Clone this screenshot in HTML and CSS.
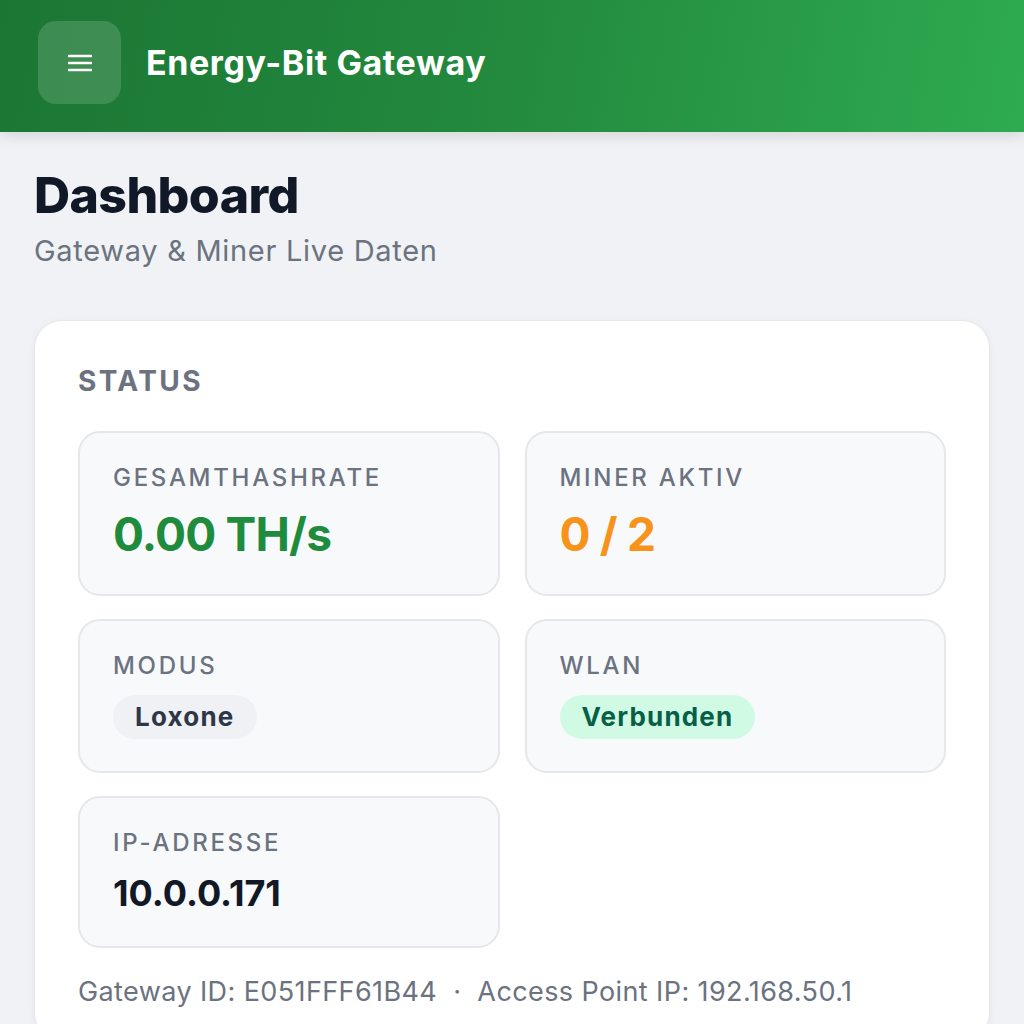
FILE: index.html
```html
<!DOCTYPE html>
<html lang="de">
<head>
    <meta charset="UTF-8">
    <meta name="viewport" content="width=device-width, initial-scale=1.0">
    <title>Energy-Bit Gateway</title>
    <link rel="stylesheet" href="styles.css">
</head>
<body>

    <!-- Top bar -->
    <header class="topbar">
        <button class="menu-btn" aria-label="Menü">
            <svg width="24" height="20" viewBox="0 0 24 20">
                <path d="M1 3h22M1 10h22M1 17h22" stroke="#fff" stroke-width="2.6" stroke-linecap="round"/>
            </svg>
        </button>
        <div class="topbar-title">Energy-Bit Gateway</div>
    </header>

    <main class="page">
        <div class="page-head">
            <h1>Dashboard</h1>
            <p class="subtitle">Gateway &amp; Miner Live Daten</p>
        </div>

        <!-- Status card -->
        <section class="card">
            <h2 class="card-title">Status</h2>

            <div class="tiles">
                <div class="tile">
                    <div class="tile-label">Gesamthashrate</div>
                    <div class="tile-value big green">0.00 TH/s</div>
                </div>
                <div class="tile">
                    <div class="tile-label">Miner aktiv</div>
                    <div class="tile-value big orange">0 / 2</div>
                </div>
                <div class="tile">
                    <div class="tile-label">Modus</div>
                    <div><span class="pill pill-grey">Loxone</span></div>
                </div>
                <div class="tile">
                    <div class="tile-label">WLAN</div>
                    <div><span class="pill pill-green">Verbunden</span></div>
                </div>
                <div class="tile">
                    <div class="tile-label">IP-Adresse</div>
                    <div class="tile-value ip">10.0.0.171</div>
                </div>
            </div>

            <p class="card-foot">Gateway ID: E051FFF61B44 &nbsp;·&nbsp; Access Point IP: 192.168.50.1</p>
        </section>
    </main>

</body>
</html>
```

FILE: styles.css
```css
/* Basics */
html, body {
    margin: 0;
    padding: 0;
}

body {
    font-family: Inter, "Noto Sans", sans-serif;
    background-color: #f0f2f5;
    color: #111827;
}

/* Top bar */
.topbar {
    height: 132px;
    box-sizing: border-box;
    padding: 0 38px 7px;
    display: flex;
    align-items: center;
    gap: 25px;
    background: linear-gradient(100deg, #1b7634 0%, #238a3e 50%, #2eab50 100%);
    box-shadow: 0 4px 14px rgba(0, 0, 0, 0.12);
}

.menu-btn {
    width: 83px;
    height: 83px;
    border: none;
    border-radius: 18px;
    background-color: rgba(255, 255, 255, 0.15);
    display: flex;
    align-items: center;
    justify-content: center;
    padding: 0;
}

.topbar-title {
    color: #fff;
    font-size: 34px;
    font-weight: 700;
    letter-spacing: 0.6px;
}

/* Page */
.page {
    padding: 33px 34px 0;
}

.page-head h1 {
    margin: 0;
    font-size: 50px;
    line-height: 1.2;
    font-weight: 800;
    letter-spacing: -0.6px;
    color: #111827;
}

.subtitle {
    margin: 6px 0 0;
    font-size: 29px;
    line-height: 1.4;
    letter-spacing: 0.7px;
    color: #6b7280;
}

/* Card */
.card {
    margin-top: 48px;
    background-color: #fff;
    border: 1px solid #e5e7eb;
    border-radius: 28px;
    padding: 42px 43px 30px;
    box-shadow: 0 2px 10px rgba(0, 0, 0, 0.05);
}

.card-title {
    margin: 0 0 32px;
    font-size: 28px;
    line-height: 1.3;
    font-weight: 700;
    letter-spacing: 2.4px;
    text-transform: uppercase;
    color: #6b7280;
}

.tiles {
    display: grid;
    grid-template-columns: 1fr 1fr;
    gap: 23px 25px;
}

.tile {
    background-color: #f8f9fb;
    border: 2px solid #e5e7eb;
    border-radius: 22px;
    padding: 29px 33px 32px;
}

.tile-label {
    font-size: 24px;
    line-height: 1.3;
    font-weight: 500;
    letter-spacing: 2.7px;
    text-transform: uppercase;
    color: #6b7280;
    margin-bottom: 14px;
}

.tile-value {
    font-weight: 700;
}

.tile-value.big {
    font-size: 46px;
    line-height: 55px;
    letter-spacing: -0.8px;
}

.tile-value.ip {
    font-size: 36px;
    line-height: 41px;
    color: #111827;
}

.green { color: #1e8c3c; }
.orange { color: #f7931a; }

.pill {
    display: inline-block;
    height: 44px;
    line-height: 44px;
    padding: 0 22px;
    border-radius: 22px;
    font-size: 26px;
    font-weight: 700;
    letter-spacing: 1.2px;
}

.pill-grey {
    background-color: #f0f1f4;
    color: #2d3748;
}

.pill-green {
    background-color: #d1fae5;
    color: #065f46;
}

.card-foot {
    margin: 25px 0 0;
    font-size: 27px;
    line-height: 1.4;
    letter-spacing: 0.4px;
    color: #6b7280;
}
```
